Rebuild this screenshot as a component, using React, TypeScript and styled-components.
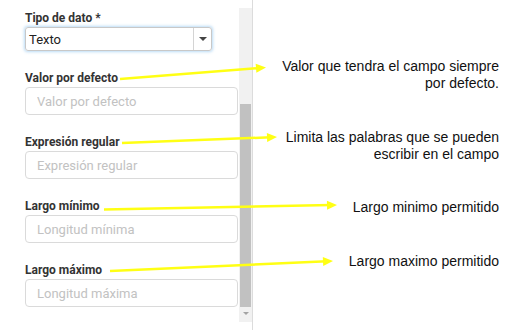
import React from "react";
import styled, { createGlobalStyle } from "styled-components";

const GlobalStyle = createGlobalStyle`
    body {
        margin: 0;
        background: #fff;
    }
`;

const Page = styled.div`
    position: relative;
    width: 528px;
    height: 335px;
    display: flex;
    background: #fff;
    overflow: hidden;
`;

const Panel = styled.div`
    width: 253px;
    height: 330px;
    border-right: 1px solid #dcdcdc;
    display: flex;
    padding-left: 25px;
    box-sizing: border-box;
`;

const Form = styled.div`
    width: 213px;
    padding-top: 11px;
    display: flex;
    flex-direction: column;
`;

const Field = styled.div`
    display: flex;
    flex-direction: column;
    margin-bottom: 20px;
`;

const Label = styled.label`
    font-family: Roboto, "Liberation Sans", sans-serif;
    font-size: 12px;
    font-weight: bold;
    line-height: 14px;
    color: #333;
    margin-bottom: 2px;
`;

const Select = styled.div<{ width: number }>`
    width: ${props => props.width}px;
    height: 24px;
    box-sizing: border-box;
    border: 1px solid #c8c8c8;
    border-radius: 3px;
    box-shadow: 0 0 3px 1px rgba(102, 175, 233, .45);
    display: flex;
    align-items: center;

    font-family: Roboto, "Liberation Sans", sans-serif;
    font-size: 13px;
    color: #222;
`;

const SelectValue = styled.span`
    flex: 1;
    padding-left: 3px;
`;

const SelectCaret = styled.span`
    width: 17px;
    height: 100%;
    border-left: 1px solid #d4d4d4;
    display: flex;
    align-items: center;
    justify-content: center;

    &::after {
        content: "";
        border-left: 4px solid transparent;
        border-right: 4px solid transparent;
        border-top: 4px solid #444;
    }
`;

const Input = styled.input`
    width: 213px;
    height: 28px;
    box-sizing: border-box;
    border: 1px solid #dadada;
    border-radius: 4px;
    padding: 0 11px;
    outline: none;

    font-family: Roboto, "Liberation Sans", sans-serif;
    font-size: 13px;
    color: #333;

    &::placeholder {
        color: #c2c2c2;
    }
`;

const Scrollbar = styled.div`
    width: 13px;
    height: 314px;
    margin: 8px 0 0 1px;
    background: #f1f1f1;
    display: flex;
    flex-direction: column;
    align-items: center;
`;

const Thumb = styled.div`
    width: 11px;
    height: 203px;
    margin-top: 96px;
    background: #c1c1c1;
`;

const DownArrow = styled.div`
    margin-top: 5px;
    border-left: 3px solid transparent;
    border-right: 3px solid transparent;
    border-top: 3px solid #a3a3a3;
`;

const Notes = styled.div`
    flex: 1;
    padding: 58px 29px 0 0;
    display: flex;
    flex-direction: column;
    align-items: flex-end;
`;

const Note = styled.div<{ top: number }>`
    margin-top: ${props => props.top}px;
    text-align: right;
    font-family: "Liberation Sans", Arial, sans-serif;
    font-size: 14px;
    line-height: 17px;
    color: #111;
`;

const Arrows = styled.svg`
    position: absolute;
    left: 0;
    top: 0;
    pointer-events: none;
`;

const arrows = [
    { x1: 120, y1: 79, x2: 266, y2: 67.5 },
    { x1: 122, y1: 143, x2: 277, y2: 137 },
    { x1: 104, y1: 209.5, x2: 337, y2: 205 },
    { x1: 110, y1: 271, x2: 333, y2: 261 },
];

const head = (a: typeof arrows[number]) => {
    const dx = a.x2 - a.x1;
    const dy = a.y2 - a.y1;
    const len = Math.hypot(dx, dy);
    const ux = dx / len;
    const uy = dy / len;
    const bx = a.x2 - ux * 10;
    const by = a.y2 - uy * 10;
    const w = 4.5;
    return `${a.x2},${a.y2} ${bx - uy * w},${by + ux * w} ${bx + uy * w},${by - ux * w}`;
};

const fields = [
    { label: "Valor por defecto", placeholder: "Valor por defecto" },
    { label: "Expresión regular", placeholder: "Expresión regular" },
    { label: "Largo mínimo", placeholder: "Longitud mínima" },
    { label: "Largo máximo", placeholder: "Longitud máxima" },
];

export default function App() {
    return (
        <Page>
            <GlobalStyle />
            <Panel>
                <Form>
                    <Field>
                        <Label>Tipo de dato *</Label>
                        <Select width={187}>
                            <SelectValue>Texto</SelectValue>
                            <SelectCaret />
                        </Select>
                    </Field>
                    {fields.map(f => (
                        <Field key={f.label}>
                            <Label>{f.label}</Label>
                            <Input placeholder={f.placeholder} readOnly />
                        </Field>
                    ))}
                </Form>
                <Scrollbar>
                    <Thumb />
                    <DownArrow />
                </Scrollbar>
            </Panel>
            <Notes>
                <Note top={0}>
                    Valor que tendra el campo siempre
                    <br />
                    por defecto.
                </Note>
                <Note top={37}>
                    Limita las palabras que se pueden
                    <br />
                    escribir en el campo
                </Note>
                <Note top={36}>Largo minimo permitido</Note>
                <Note top={37}>Largo maximo permitido</Note>
            </Notes>
            <Arrows width={528} height={335}>
                {arrows.map((a, i) => (
                    <g key={i}>
                        <line
                            x1={a.x1}
                            y1={a.y1}
                            x2={a.x2 - (a.x2 - a.x1) / Math.hypot(a.x2 - a.x1, a.y2 - a.y1) * 6}
                            y2={a.y2 - (a.y2 - a.y1) / Math.hypot(a.x2 - a.x1, a.y2 - a.y1) * 6}
                            stroke="#ffff14"
                            strokeWidth={2.5}
                        />
                        <polygon points={head(a)} fill="#ffff14" />
                    </g>
                ))}
            </Arrows>
        </Page>
    );
}
